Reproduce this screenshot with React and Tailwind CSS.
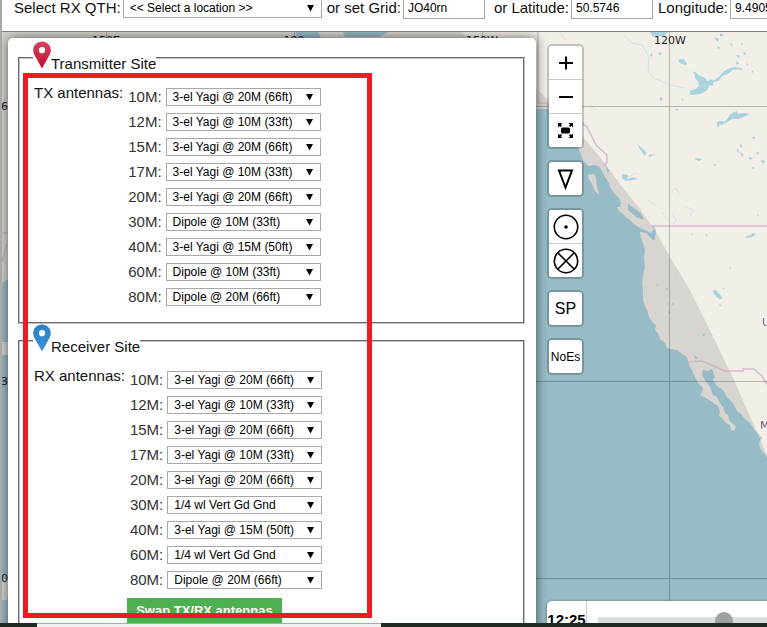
import React from "react";

const ANTENNAS = [
  "3-el Yagi @ 20M (66ft)",
  "3-el Yagi @ 10M (33ft)",
  "3-el Yagi @ 15M (50ft)",
  "Dipole @ 10M (33ft)",
  "Dipole @ 20M (66ft)",
  "1/4 wl Vert Gd Gnd",
];

const TX = [
  ["10M", 0], ["12M", 1], ["15M", 0], ["17M", 1], ["20M", 0],
  ["30M", 3], ["40M", 2], ["60M", 3], ["80M", 4],
];

const RX = [
  ["10M", 0], ["12M", 1], ["15M", 0], ["17M", 1], ["20M", 0],
  ["30M", 5], ["40M", 2], ["60M", 5], ["80M", 4],
];

function Arrow() {
  return (
    <svg className="pointer-events-none absolute top-1/2 right-2 -translate-y-1/2" width="7" height="8" viewBox="0 0 7 8" aria-hidden="true">
      <path d="M0 1h7L3.500 7.500z" fill="#000" />
    </svg>
  );
}

function Pin({ id, top, bottom }) {
  return (
    <svg width="18" height="28" viewBox="0 0 18 28" aria-hidden="true">
      <defs>
        <linearGradient id={id} x1="0" y1="0" x2="0" y2="1">
          <stop offset="0" stopColor={top} />
          <stop offset="1" stopColor={bottom} />
        </linearGradient>
      </defs>
      <path
        fillRule="evenodd"
        fill={`url(#${id})`}
        d="M9 .5C4.100.5.200 4.300.200 9.200c0 3.300 1.600 5.300 3.500 8.700L9 27.500l5.300-9.600c1.900-3.400 3.500-5.400 3.500-8.700C17.800 4.300 13.900.5 9 .5zM9 6.100a3.100 3.100 0 1 1 0 6.200a3.100 3.100 0 0 1 0-6.200z"
      />
    </svg>
  );
}

function Site({ pin, title, label, prefix, rows, children }) {
  return (
    <fieldset className="min-w-0 border-2 border-[#c0c0c0] px-[14px] pt-[14px] pb-4 [border-style:groove]">
      <legend className="-ml-px flex h-[34px] items-start">
        {pin}
        <span className="mt-[14px] leading-[18px]">{title}</span>
      </legend>
      <div className="flex items-start gap-[5px]">
        <span className="-mt-[5px] leading-[18px] whitespace-nowrap">{label}</span>
        <div className="-mt-px flex flex-col gap-[7px]">
          {rows.map(([band, index]) => (
            <div key={band} className="flex h-[18px] items-center gap-1">
              <label htmlFor={prefix + band} className="text-[#333]">{band}:</label>
              <div className="relative">
                <select
                  id={prefix + band}
                  defaultValue={ANTENNAS[index]}
                  className="block h-[18px] w-[155px] appearance-none border border-[#a9a9a9] bg-white pl-[6px] text-xs leading-4 text-black"
                >
                  {ANTENNAS.map((a) => <option key={a}>{a}</option>)}
                </select>
                <Arrow />
              </div>
            </div>
          ))}
          {children}
        </div>
      </div>
    </fieldset>
  );
}

function ControlGroup({ children }) {
  return (
    <div className="w-[37px] divide-y divide-[#ccc] overflow-hidden rounded-[5px] border-2 border-black/20 bg-white bg-clip-padding">
      {children}
    </div>
  );
}

function Control({ name, children }) {
  return (
    <button type="button" aria-label={name} className="box-content flex h-[33px] w-full items-center justify-center bg-white text-black">
      {children}
    </button>
  );
}

function WorldMap() {
  return (
    <svg className="absolute inset-0 h-full w-full" viewBox="2 32 765 591" preserveAspectRatio="xMinYMin slice" aria-hidden="true">
      <rect x="0" y="0" width="1600" height="1600" fill="#f2efe9" />
      <g fill="#aad3df">
        <path d="M537 109L547 109L556 113L568 118L581 127L580 137L577 145L580 152L583 160L588 166L594 165L600 167L603 173L605 177L609 183L610 187L614 193L618 197L621 202L620 207L617 207L619 211L624 215L627 218L630 220L634 224L640 228L645 230L651 233L654 229L651 225L655 227L656 232L654 241L650 237L646 233L640 232L641 238L643 243L645 250L644 258L645 267L643 276L642 283L643 291L643 300L645 306L647 310L649 317L653 323L656 325L655 330L658 333L660 339L665 343L667 348L672 349L677 350L682 354L687 357L690 367L692 370L695 377L698 383L703 388L702 392L700 395L706 398L712 402L718 406L720 412L719 416L722 418L726 423L730 425L731 430L734 431L736 427L732 423L729 420L728 415L725 413L723 407L720 403L717 397L713 395L710 387L705 380L702 375L703 369L707 371L712 369L715 377L713 380L717 386L723 390L727 397L733 403L737 411L740 413L745 419L750 423L754 429L758 433L762 438L759 443L760 448L763 452L767 457V700H0V109z" />
        <path d="M296 32h22l3 6h-24zM343 32h45l-9 5h-34zM650 32h18l-4 4h-7l-4 1z" />
        <path d="M622 174l6 1-2 6-4-3zM606 166l4 5-3 1zM628 204l13 9 3 7-8-3-8-7z" />
        <g transform="translate(530 30) scale(.33333)">
          <path d="M480 182l18-6 9-9-3-13-9-9-1-12-7-9 10 3 12 10 15 6 8 11 10-6 10 3 16-12 12-14 18-10 16-4 19 3 7 7-14-3-18 2-16 13-14 4-12 15-16 5-2 10-10-1-6 14-18 11-20 3-13 1z" />
          <path d="M446 88l14 0 11 12-2 6-13-3-10-8zM560 276l12-4 12 4 18-24 18-9 4 8 20-2 16 4-20 8-15 6-18-1-12 8-20 11-6-2-3 10-5-8z" />
          <path d="M556 22l12 5-3 8-12-8zM388 66l7 4-4 6-5-3zM362 70l6 2-3 8-5-3zM391 201l8 4-5 9-5-5zM435 235l12 5-8 3zM455 205l6 3-5 5zM570 10l12 5-12 5zM600 38l9 6-4 5zM633 38l8 3-6 4zM560 50l13 2-8 5zM618 75l12 2-4 8zM640 64l9 7-8 5zM619 94l9 6-10 4zM649 97l6 8-4 4zM665 120l6 4-5 6zM666 320l10 2-5 7zM630 340l8 8-7 5zM620 357l8 3-4 9zM630 366l12 8-7 6zM655 380l14 4-8 7zM680 363l8 6-8 6zM692 390l14 3-8 10zM492 386l12-2 14 4-12 5zM665 410l10 5-8 2zM552 401l7 5-7 3zM320 340l30 28-6 10-12-18zM355 376l24-5-20 10zM280 450l30-8 16 5-30 5z" />
          <path d="M548 782l10-2 20 24-8 5-19-18zM567 822l8 4-4 4zM579 773l5 3-4 3zM380 762l5 3-4 3zM408 773l6 4-4 5zM411 818l4 4-4 2zM427 818l5 4-4 5zM415 843l7 4-5 4zM598 710l6 3-4 3zM645 620l16-5 8-6 8 2-8 10-20 2zM527 612l6 4-4 4zM485 610l5 3-5 3zM682 552l7 3-6 4zM490 974l13 10-6 4zM515 914l11-5-4 10z" />
        </g>
        <g stroke="#aad3df" strokeWidth=".8" fill="none" opacity=".6">
          <path d="M624 36l8 7 10 2 7 12-1 14 6 7 17 7 13 3M560 33l5 7M672 191l4-3 4 7M672 213l4 7-2 4M685 206l8 4-3 7M626 178l10-5M662 212l5 8M648 200l8 6M590 105l6 5" />
        </g>
      </g>
      <path d="M588 175l6-1 2 4 1 10 3 7-5-4-4-9-3-4z" fill="#f2efe9" />
      <path d="M2 342h8v13H2zM2 578h8v8l-3 14H2zM0 106h10v172l-10 6z" fill="#f2efe9" />
      <path d="M0 32H460L500 58L538 90L570 122L600 157L620 184L640 209L655 230L670 257L690 290L710 330L733 378L753 423L767 455V1600H0z" fill="#000" opacity=".105" />
      <g stroke="#c8adbd" strokeWidth="1.500" fill="none" opacity=".75">
        <path d="M538 32v71h8l10 7 12 6 14 7 5 4 9 18 11 10v7l-3 4M652 226H900M688 362l14-1 23 10h18v-2h11l8 7 5 8M2 262l5-18M2 233h6" />
      </g>
      <g fill="#000" opacity=".24">
        <rect x="106" y="32" width="1" height="591" />
        <rect x="294" y="32" width="1" height="591" />
        <rect x="482" y="32" width="1" height="591" />
        <rect x="669" y="32" width="1" height="700" />
        <rect x="0" y="106" width="1200" height="1" />
        <rect x="0" y="381" width="1200" height="1" />
        <rect x="0" y="578" width="1200" height="1" />
      </g>
      <g className="text-[11px]" fontFamily="DejaVu Sans" fill="#222">
        <text x="106" y="44" textAnchor="middle">150E</text>
        <text x="294" y="44" textAnchor="middle">180</text>
        <text x="482" y="44" textAnchor="middle">150W</text>
        <text x="670" y="44" textAnchor="middle">120W</text>
        <text x="1" y="110">60N</text>
        <text x="1" y="385">30N</text>
        <text x="1" y="582">0</text>
        <text x="762" y="326" fill="#704c72" stroke="#fff" strokeWidth="2" paintOrder="stroke">United States</text>
        <text x="760" y="429" fill="#704c72" stroke="#fff" strokeWidth="2" paintOrder="stroke">México</text>
      </g>
    </svg>
  );
}

const field = "h-[22px] w-[82px] shrink-0 border border-[#a9a9a9] bg-white px-1 text-xs text-black";

export default function App() {
  return (
    <div className="flex h-screen flex-col overflow-hidden bg-white font-['Liberation_Sans',Arial,sans-serif] text-[15px] text-[#111]">
      <div className="flex min-h-0 flex-1 flex-col border-l-2 border-[#a9a9a9]">
        <header className="flex h-8 shrink-0 items-start overflow-hidden border-b border-[#808080] pl-3 whitespace-nowrap">
          <div className="-mt-[3px] flex items-center">
            <label htmlFor="qth" className="mr-[2px]">Select RX QTH:</label>
            <div className="relative mr-[5px]">
              <select id="qth" className="block h-5 w-[199px] appearance-none border border-[#a9a9a9] bg-white pl-[6px] text-xs text-black">
                <option>&lt;&lt; Select a location &gt;&gt;</option>
              </select>
              <Arrow />
            </div>
            <label htmlFor="grid" className="mr-[2px]">or set Grid:</label>
            <input id="grid" defaultValue="JO40rn" className={`${field} mr-[9px]`} />
            <label htmlFor="lat" className="mr-[2px]">or Latitude:</label>
            <input id="lat" defaultValue="50.5746" className={`${field} mr-[5px]`} />
            <label htmlFor="lon" className="mr-[2px]">Longitude:</label>
            <input id="lon" defaultValue="9.4905" className={field} />
          </div>
        </header>

        <main className="relative min-h-0 flex-1 overflow-hidden">
          <WorldMap />
          <div className="relative flex h-full items-start gap-[11px] pl-[6px]">
            <section className="mt-[6px] w-[528px] shrink-0 rounded-[5px] bg-white pt-[3px] pr-[11px] pb-4 pl-[10px] shadow-[0_0_12px_rgba(0,0,0,0.6)]">
              <Site pin={<Pin id="pin-tx" top="#d6455f" bottom="#c00d31" />} title="Transmitter Site" label="TX antennas:" prefix="tx" rows={TX} />
              <Site pin={<Pin id="pin-rx" top="#2b7fc6" bottom="#3a93d8" />} title="Receiver Site" label="RX antennas:" prefix="rx" rows={RX}>
                <button type="button" className="mt-[2px] -ml-[3px] h-[26px] w-[155px] bg-[#4caf50] text-[13px] font-bold whitespace-nowrap text-white">
                  Swap TX/RX antennas
                </button>
              </Site>
            </section>

            <div className="flex h-full min-w-0 flex-1 flex-col justify-between pt-3">
              <div className="flex flex-col gap-[11px]">
                <ControlGroup>
                  <Control name="Zoom in">
                    <svg width="14" height="14" viewBox="0 0 14 14"><path d="M0 7h14M7 .5v13" stroke="#000" strokeWidth="2" /></svg>
                  </Control>
                  <Control name="Zoom out">
                    <svg width="14" height="14" viewBox="0 0 14 14"><path d="M0 7h14" stroke="#000" strokeWidth="2" /></svg>
                  </Control>
                  <Control name="Full screen">
                    <svg width="17" height="17" viewBox="0 0 17 17">
                      <rect x="4" y="5.500" width="9" height="6" rx="1.500" />
                      <path d="M1 1h4.500L3.900 2.600 5 3.700 3.700 5 2.600 3.900 1 5.500zM16 1v4.500L14.400 3.900 13.300 5 12 3.700 13.100 2.600 11.500 1zM1 16v-4.500l1.600 1.600L3.700 12 5 13.300 3.900 14.400 5.500 16zM16 16h-4.500l1.600-1.600-1.100-1.100 1.300-1.300 1.100 1.100 1.600-1.600z" />
                    </svg>
                  </Control>
                </ControlGroup>
                <ControlGroup>
                  <Control name="Beam">
                    <svg width="17" height="22" viewBox="0 0 17 22"><path d="M2 2.500h13L8.500 19.500z" fill="none" stroke="#000" strokeWidth="2" /></svg>
                  </Control>
                </ControlGroup>
                <ControlGroup>
                  <Control name="Point target">
                    <svg width="26" height="26" viewBox="0 0 26 26"><circle cx="13" cy="13" r="11.700" fill="none" stroke="#000" strokeWidth="1.600" /><circle cx="13" cy="13" r="1.800" /></svg>
                  </Control>
                  <Control name="Area target">
                    <svg width="26" height="26" viewBox="0 0 26 26"><g fill="none" stroke="#000" strokeWidth="1.600"><circle cx="13" cy="13" r="11.700" /><path d="M4.700 4.700l16.600 16.600M21.300 4.700L4.700 21.300" /></g></svg>
                  </Control>
                </ControlGroup>
                <ControlGroup>
                  <Control name="Short path"><span className="text-base">SP</span></Control>
                </ControlGroup>
                <ControlGroup>
                  <Control name="No sporadic E"><span className="text-xs">NoEs</span></Control>
                </ControlGroup>
              </div>

              <div className="flex h-[22px] items-stretch overflow-hidden rounded-tl-[5px] bg-white shadow-[0_0_3px_rgba(0,0,0,0.4)]">
                <time className="w-10 shrink-0 border-r border-[#ccc] pt-[10px] text-center text-[15px] leading-[18px] font-bold text-black">12:25</time>
                <input
                  type="range"
                  aria-label="Time of day"
                  min="0"
                  max="1439"
                  defaultValue="771"
                  className="mt-[11px] ml-[11px] h-[18px] w-[236px] shrink-0 appearance-none bg-[linear-gradient(#ddd,#ddd)] bg-[length:100%_8px] bg-center bg-no-repeat [&::-webkit-slider-thumb]:size-[18px] [&::-webkit-slider-thumb]:appearance-none [&::-webkit-slider-thumb]:rounded-full [&::-webkit-slider-thumb]:bg-[#a0a0a0]"
                />
              </div>
            </div>
          </div>
        </main>
      </div>

      <footer className="h-1 shrink-0 bg-[#1e2b20] pl-[37px]">
        <div className="h-full w-[344px] border-t border-[#aaa] bg-[#f1f1f1]" />
      </footer>
      <div className="pointer-events-none absolute top-[73px] left-[23px] h-[545px] w-[349px] border-5 border-[#ed1c24]" />
    </div>
  );
}
